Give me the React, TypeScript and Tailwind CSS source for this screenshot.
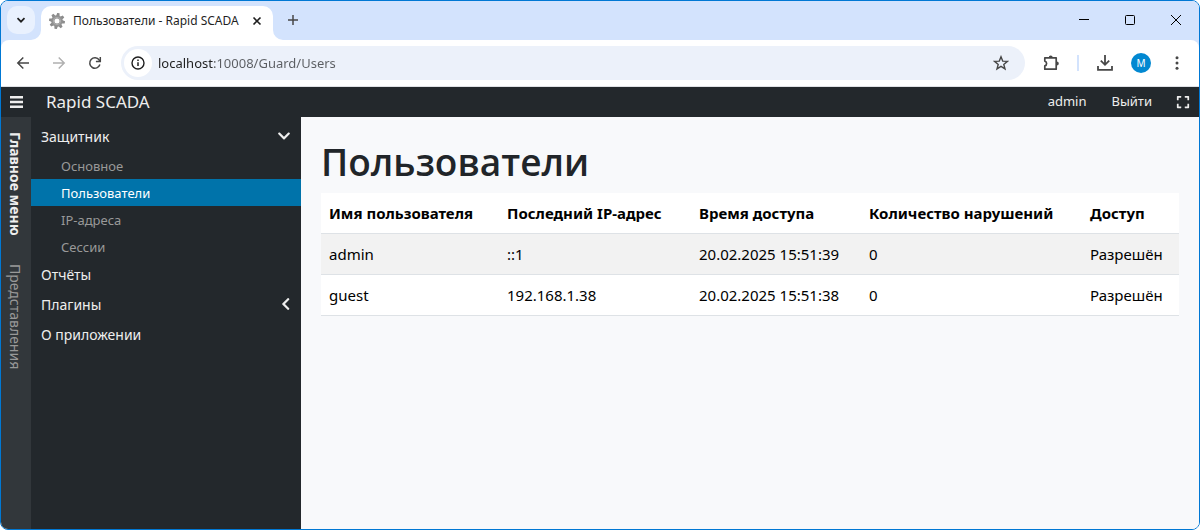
import type { ReactNode } from 'react';
import { FaBars, FaChevronDown, FaChevronLeft, FaExpand } from 'react-icons/fa';

type IconProps = { className?: string; children: ReactNode; box?: number };

function Glyph({ className = '', children, box = 16 }: IconProps) {
  return (
    <svg viewBox={`0 0 ${box} ${box}`} width={box} height={box} fill="none" stroke="currentColor" className={className} aria-hidden="true">
      {children}
    </svg>
  );
}

function GearIcon() {
  return (
    <svg viewBox="0 0 16 16" width="16" height="16" aria-hidden="true">
      <g fill="#8c8c8c">
        {[0, 45, 90, 135, 180, 225, 270, 315].map((angle) => (
          <path key={angle} d="M6.2 3.2 6.8 0h2.4l.6 3.2z" transform={`rotate(${angle + 10} 8 8)`} />
        ))}
      </g>
      <circle cx="8" cy="8" r="4.1" fill="none" stroke="#929292" strokeWidth="3.2" />
      <circle cx="8" cy="8" r="3.6" fill="none" stroke="#b5b5b5" strokeWidth="0.8" />
    </svg>
  );
}

function TabStrip() {
  return (
    <div className="flex h-[39px] items-end bg-[#d3e3fd] pl-1.5">
      <button type="button" aria-label="Поиск вкладок" className="mb-1.5 flex size-7 items-center justify-center rounded-[10px] bg-[#e9f1fe] text-[#1f1f1f]">
        <Glyph box={10}>
          <path d="M1.5 3.2 5 6.7l3.5-3.5" strokeWidth="1.7" />
        </Glyph>
      </button>
      <svg viewBox="0 0 10 10" width="10" height="10" className="-ml-1 shrink-0 fill-white" aria-hidden="true">
        <path d="M10 0v10H0A10 10 0 0 0 10 0z" />
      </svg>
      <div className="flex h-[34px] w-[232px] items-center rounded-t-[10px] bg-white pr-2 pb-1 pl-2">
        <GearIcon />
        <span className="ml-2 flex-1 whitespace-nowrap text-[12px] text-[#1f1f1f]">Пользователи - Rapid SCADA</span>
        <button type="button" aria-label="Закрыть вкладку" className="flex size-4 items-center justify-center text-[#1f1f1f]">
          <Glyph box={10}>
            <path d="m1.5 1.5 7 7m0-7-7 7" strokeWidth="1.6" />
          </Glyph>
        </button>
      </div>
      <svg viewBox="0 0 10 10" width="10" height="10" className="shrink-0 fill-white" aria-hidden="true">
        <path d="M0 0v10h10A10 10 0 0 1 0 0z" />
      </svg>
      <button type="button" aria-label="Новая вкладка" className="mb-3 ml-0.5 flex size-4 items-center justify-center text-[#474747]">
        <Glyph box={12}>
          <path d="M6 1v10M1 6h10" strokeWidth="1.5" />
        </Glyph>
      </button>
      <div className="mb-2.5 ml-auto flex text-black">
        <button type="button" aria-label="Свернуть" className="flex h-5 w-[46px] items-center justify-center">
          <Glyph box={10}>
            <path d="M0 4.5h10" />
          </Glyph>
        </button>
        <button type="button" aria-label="Развернуть" className="flex h-5 w-[46px] items-center justify-center">
          <Glyph box={10}>
            <rect x="0.5" y="0.5" width="9" height="9" rx="1" />
          </Glyph>
        </button>
        <button type="button" aria-label="Закрыть" className="flex h-5 w-[46px] items-center justify-center">
          <Glyph box={10}>
            <path d="m0 0 10 10M10 0 0 10" />
          </Glyph>
        </button>
      </div>
    </div>
  );
}

function Toolbar() {
  return (
    <div className="bg-[#d3e3fd]">
      <div className="flex h-[47px] items-center rounded-t-[8px] border-b border-[#dfe1e5] bg-white pr-3.5 pl-3.5 text-[#474747]">
        <button type="button" aria-label="Назад">
          <Glyph>
            <path d="M14 8H3m5.3-5.5L2.8 8l5.5 5.5" strokeWidth="1.5" />
          </Glyph>
        </button>
        <button type="button" aria-label="Вперёд" disabled className="ml-5 text-[#b0b0b0]">
          <Glyph>
            <path d="M2 8h11M7.7 2.5 13.2 8l-5.5 5.5" strokeWidth="1.5" />
          </Glyph>
        </button>
        <button type="button" aria-label="Обновить" className="ml-5">
          <Glyph>
            <path d="M12.9 9.6A5.2 5.2 0 1 1 12.2 5l.9 1.2" strokeWidth="1.5" />
            <path d="M13.3 2v4.4H8.9" strokeWidth="1.5" />
          </Glyph>
        </button>
        <div className="ml-[18px] flex h-[34px] flex-1 items-center rounded-full bg-[#ecf1fa] pr-4 pl-[3px]">
          <button type="button" aria-label="Сведения о сайте" className="flex size-7 items-center justify-center rounded-full bg-white text-[#1f1f1f]">
            <Glyph>
              <circle cx="8" cy="8" r="6" strokeWidth="1.4" />
              <path d="M8 7.2v3.9M8 4.6v1.5" strokeWidth="1.5" />
            </Glyph>
          </button>
          <input
            aria-label="Адресная строка"
            readOnly
            defaultValue="localhost:10008/Guard/Users"
            className="ml-1.5 h-7 min-w-0 flex-1 bg-linear-[90deg,#1f1f1f_56px,#5a5d61_56px] bg-clip-text text-[13px] leading-6 text-transparent outline-none"
          />
          <button type="button" aria-label="Добавить в закладки">
            <Glyph>
              <path d="m8 1.8 1.7 4.3 4.7.3-3.6 3 1.2 4.5L8 11.4l-4 2.5 1.2-4.5-3.6-3 4.7-.3z" strokeWidth="1.4" />
            </Glyph>
          </button>
        </div>
        <button type="button" aria-label="Расширения" className="ml-4">
          <Glyph box={20}>
            <path d="M3.8 4.8h11.4v11.4H3.8v-3.3a2.5 2.5 0 0 0 0-4.8z" strokeWidth="1.7" strokeLinejoin="round" />
            <path d="M7.7 4.4a2 2 0 0 1 4 0zM15.8 8.5a2 2 0 0 1 0 4z" fill="currentColor" stroke="none" />
          </Glyph>
        </button>
        <span className="ml-4 h-4 w-0.5 bg-[#d3e3fd]" />
        <button type="button" aria-label="Загрузки" className="ml-4">
          <Glyph box={20}>
            <path d="M10 2v9.5M5.8 7.6l4.2 4.2 4.2-4.2M3 13v3.8h14V13" strokeWidth="1.8" />
          </Glyph>
        </button>
        <button type="button" aria-label="Профиль" className="ml-4 flex size-5 items-center justify-center rounded-full bg-[#0288d1] text-[10px] text-white">
          М
        </button>
        <button type="button" aria-label="Меню браузера" className="ml-[18px]">
          <Glyph>
            <g fill="currentColor" stroke="none">
              <circle cx="8" cy="2.8" r="1.5" />
              <circle cx="8" cy="8" r="1.5" />
              <circle cx="8" cy="13.2" r="1.5" />
            </g>
          </Glyph>
        </button>
      </div>
    </div>
  );
}

function AppHeader() {
  return (
    <header className="flex h-[30px] items-center bg-[#23282c] pr-[9px] pl-2 text-[#eeeeee]">
      <button type="button" aria-label="Меню">
        <svg viewBox="0 0 14 14" className="size-3.5 fill-current" aria-hidden="true">
          <path d="M1 1h13v2.4H1zM1 5.8h13v2.4H1zM1 10.6h13V13H1z" />
        </svg>
      </button>
      <a href="#home" className="ml-[23px] text-[17px]">Rapid SCADA</a>
      <a href="#admin" className="ml-auto text-[13px]">admin</a>
      <a href="#logout" className="ml-[25px] text-[13px]">Выйти</a>
      <button type="button" aria-label="Во весь экран" className="ml-6">
        <FaExpand className="size-3.5" />
      </button>
    </header>
  );
}

function SideRail() {
  return (
    <div className="flex w-[30px] shrink-0 flex-col items-center gap-7 bg-[#32373b] pt-[15px] pr-0.5 text-[14px] leading-[20px]">
      <button type="button" className="font-bold text-[#eeeeee] [writing-mode:vertical-rl]">Главное меню</button>
      <button type="button" className="text-[#999999] [writing-mode:vertical-rl]">Представления</button>
    </div>
  );
}

const mainItem = 'flex h-[30px] items-center justify-between px-2.5 pb-0.5 text-[14px] text-[#eeeeee]';
const subItems = ['Основное', 'Пользователи', 'IP-адреса', 'Сессии'];

function SideMenu() {
  return (
    <nav className="w-[270px] shrink-0 bg-[#23282c] pt-[5px]">
      <a href="#guard" className={mainItem}>
        Защитник
        <FaChevronDown className="size-3.5" />
      </a>
      {subItems.map((item) => (
        <a
          key={item}
          href={`#${item}`}
          className={
            item === 'Пользователи'
              ? 'flex h-[27px] items-center bg-[#0073aa] pt-0.5 pl-[30px] text-[13px] text-white'
              : 'flex h-[27px] items-center pt-0.5 pl-[30px] text-[13px] text-[#999999]'
          }
        >
          {item}
        </a>
      ))}
      <a href="#reports" className={mainItem}>Отчёты</a>
      <a href="#plugins" className={mainItem}>
        Плагины
        <FaChevronLeft className="size-3.5" viewBox="-64 0 320 512" />
      </a>
      <a href="#about" className={mainItem}>О приложении</a>
    </nav>
  );
}

const users = [
  { name: 'admin', ip: '::1', time: '20.02.2025 15:51:39', violations: 0, access: 'Разрешён' },
  { name: 'guest', ip: '192.168.1.38', time: '20.02.2025 15:51:38', violations: 0, access: 'Разрешён' },
];

function UsersPage() {
  return (
    <main className="min-w-0 flex-1 bg-[#f8f9fb] p-5">
      <h1 className="mb-2 pt-0.5 font-['Open_Sans','Noto_Sans',sans-serif] text-[37px] leading-[46px] font-semibold text-[#212529]">Пользователи</h1>
      <table className="w-full bg-white text-left text-[15px] leading-6 whitespace-nowrap text-black">
        <colgroup>
          <col className="w-[178px]" />
          <col className="w-[192px]" />
          <col className="w-[170px]" />
          <col className="w-[221px]" />
          <col />
        </colgroup>
        <thead>
          <tr className="border-b border-[#dee2e6]">
            <th className="p-2">Имя пользователя</th>
            <th className="p-2">Последний IP-адрес</th>
            <th className="p-2">Время доступа</th>
            <th className="p-2">Количество нарушений</th>
            <th className="p-2">Доступ</th>
          </tr>
        </thead>
        <tbody>
          {users.map((user) => (
            <tr key={user.name} className="border-b border-[#dee2e6] odd:bg-[#f2f2f2]">
              <td className="p-2">{user.name}</td>
              <td className="p-2">{user.ip}</td>
              <td className="p-2">{user.time}</td>
              <td className="p-2">{user.violations}</td>
              <td className="p-2">{user.access}</td>
            </tr>
          ))}
        </tbody>
      </table>
    </main>
  );
}

export default function App() {
  return (
    <div className="flex min-h-screen flex-col overflow-hidden rounded-[8px] border border-[#0078d4] font-['Noto_Sans','Open_Sans',sans-serif]">
      <TabStrip />
      <Toolbar />
      <AppHeader />
      <div className="flex flex-1">
        <SideRail />
        <SideMenu />
        <UsersPage />
      </div>
    </div>
  );
}
